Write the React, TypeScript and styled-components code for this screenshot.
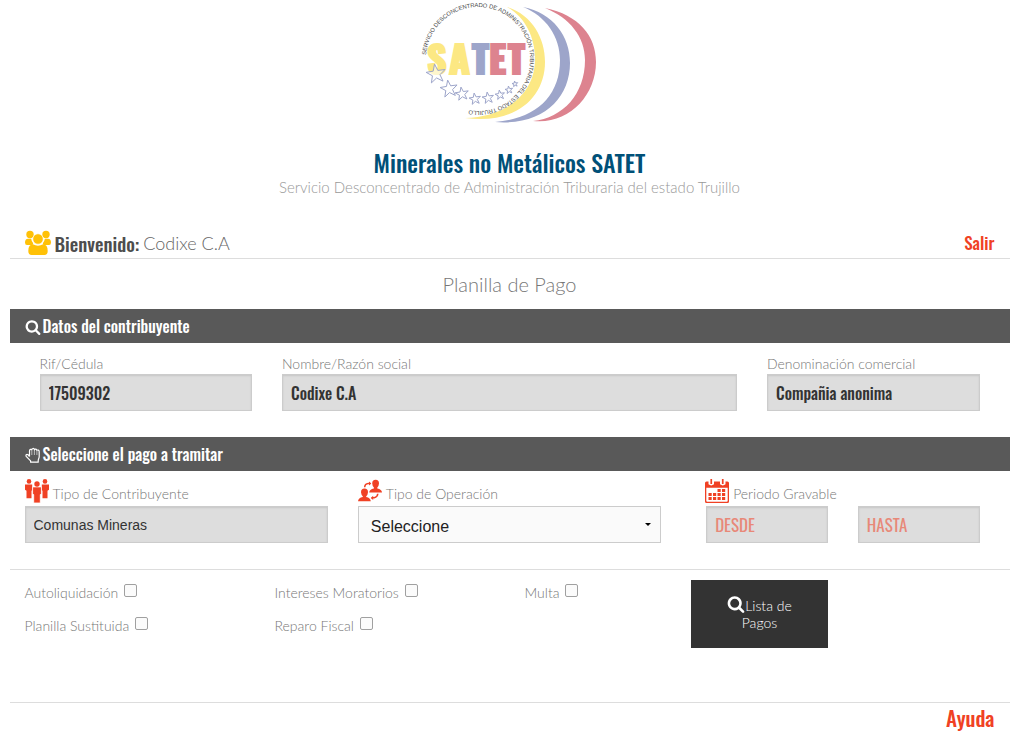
import React from "react";
import styled, { createGlobalStyle } from "styled-components";

const display = '"Oswald", "Liberation Sans Narrow", "Roboto Condensed", "Open Sans Condensed", "Roboto", sans-serif';
const body = '"Lato", sans-serif';
const red = "#f04124";

const GlobalStyle = createGlobalStyle`
  *, *::before, *::after { box-sizing: border-box; }
  body {
    margin: 0;
    background: #fff;
    color: #666;
    font-family: ${body};
    font-size: 14px;
    font-weight: 300;
    line-height: 20px;
  }
`;

const Page = styled.main`
  max-width: 1000px;
  margin: 0 auto;
`;

const Header = styled.header`
  display: flex;
  flex-direction: column;
  align-items: center;
  text-align: center;
`;

const Title = styled.h1`
  margin: 19px 0 0;
  color: #005078;
  font-family: ${display};
  font-size: 24px;
  font-weight: 500;
  line-height: 30px;
`;

const Subtitle = styled.p`
  margin: 0;
  color: #999;
  font-size: 15px;
  line-height: 20px;
`;

const Welcome = styled.div`
  display: flex;
  align-items: center;
  justify-content: space-between;
  height: 32px;
  margin-top: 30px;
  padding: 0 15px;
  border-bottom: 1px solid #ddd;
`;

const Greeting = styled.div`
  display: flex;
  align-items: center;
  gap: 4px;
  font-size: 18px;
`;

const GreetingLabel = styled.strong`
  color: #4d4d4d;
  font-family: ${display};
  font-size: 19px;
  font-weight: 500;
`;

const ActionLink = styled.a<{ $size: number }>`
  color: ${red};
  font-family: ${display};
  font-size: ${(p) => p.$size}px;
  font-weight: 500;
  line-height: 30px;
  text-decoration: none;
`;

const FormTitle = styled.h2`
  margin: 10px 0;
  color: #777;
  font-size: 20px;
  font-weight: 300;
  line-height: 30px;
  text-align: center;
`;

const SectionBar = styled.h3`
  display: flex;
  align-items: center;
  gap: 2px;
  height: 34px;
  margin: 0;
  padding: 0 15px;
  background: #595959;
  color: #fff;
  font-family: ${display};
  font-size: 16px;
  font-weight: 500;

  svg { margin-top: 2px; }
`;

const TaxpayerRow = styled.div`
  display: grid;
  grid-template-columns: 1fr 2fr 1fr;
  padding: 11px 15px 26px;
`;

const PaymentRow = styled.div`
  display: grid;
  grid-template-columns: 1fr 1fr 1fr;
  gap: 30px;
  padding: 7px 15px 26px;
  border-bottom: 1px solid #ddd;
`;

const Field = styled.div`
  min-width: 0;
`;

const TaxpayerField = styled(Field)`
  padding: 0 15px;
`;

const Label = styled.label`
  display: block;
  color: #777;
`;

const IconLabel = styled.label`
  display: flex;
  align-items: flex-end;
  gap: 4px;
  height: 28px;
  padding-bottom: 3px;
  line-height: 18px;
  color: #777;
`;

const TextInput = styled.input<{ $plain?: boolean }>`
  display: block;
  width: 100%;
  height: 37px;
  padding: 8px;
  border: 1px solid #ccc;
  border-radius: 0;
  background: #ddd;
  box-shadow: inset 0 1px 2px rgba(0, 0, 0, 0.1);
  color: #333;
  font-family: ${(p) => (p.$plain ? '"Liberation Sans", sans-serif' : display)};
  font-size: ${(p) => (p.$plain ? 14 : 16)}px;
  font-weight: ${(p) => (p.$plain ? 400 : 500)};

  &::placeholder {
    color: #e88878;
    font-size: 17px;
    font-weight: 400;
    opacity: 1;
  }
`;

const Select = styled.select`
  display: block;
  width: 100%;
  height: 37px;
  padding: 3px 12px 0;
  border: 1px solid #ccc;
  border-radius: 0;
  appearance: none;
  background: #fafafa url("data:image/svg+xml,%3Csvg xmlns='http://www.w3.org/2000/svg' width='6' height='3'%3E%3Cpath d='M0 0h6L3 3z'/%3E%3C/svg%3E") no-repeat right 9px center;
  color: #222;
  font-family: "Liberation Sans", sans-serif;
  font-size: 16px;
`;

const Period = styled.fieldset`
  min-width: 0;
  margin: 0;
  padding: 0;
  border: 0;
`;

const DateRow = styled.div`
  display: grid;
  grid-template-columns: 1fr 1fr;
  gap: 30px;
  padding: 0 15px;
`;

const PeriodLabel = styled(IconLabel)`
  padding-left: 14px;
`;

const OptionsRow = styled.div`
  display: grid;
  grid-template-columns: 3fr 3fr 2fr 2fr 2fr;
  min-height: 133px;
  padding-top: 10px;
  border-bottom: 1px solid #ddd;
`;

const OptionColumn = styled.div`
  display: flex;
  flex-direction: column;
  gap: 11px;
  padding: 2px 15px 0;
`;

const Option = styled.label`
  display: flex;
  align-items: flex-start;
  gap: 6px;
  color: #777;
  white-space: nowrap;
  line-height: 22px;
`;

const Checkbox = styled.input.attrs({ type: "checkbox" })`
  width: 13px;
  height: 13px;
  margin: 2px 0 0;
  border: 1px solid #a0a0a0;
  border-radius: 2px;
  appearance: none;
  background: #fbfbfb;

  &:checked {
    background: #777;
    box-shadow: inset 0 0 0 2px #fff;
  }
`;

const ButtonColumn = styled.div`
  padding: 0 15px;
`;

const ListButton = styled.button`
  width: 100%;
  height: 68px;
  padding: 0 28px 2px;
  border: 0;
  background: #333;
  color: #fff;
  font-family: ${body};
  font-size: 14px;
  font-weight: 300;
  line-height: 17px;

  svg { vertical-align: -2px; }
`;

const Footer = styled.footer`
  display: flex;
  justify-content: flex-end;
  padding: 0 15px;
`;

const SearchIcon = ({ size }: { size: number }) => (
  <svg width={size} height={size} viewBox="0 0 1792 1792" fill="currentColor" aria-hidden="true">
    <path d="M1216 832q0-185-131.5-316.5t-316.5-131.5-316.5 131.5-131.5 316.5 131.5 316.5 316.5 131.5 316.5-131.5 131.5-316.5zm512 832q0 52-38 90t-90 38q-54 0-90-38l-343-342q-179 124-399 124-143 0-273.5-55.5t-225-150-150-225-55.5-273.5 55.5-273.5 150-225 225-150 273.5-55.5 273.5 55.5 225 150 150 225 55.5 273.5q0 220-124 399l343 343q37 37 37 90z" />
  </svg>
);

const HandIcon = () => (
  <svg width="16" height="16" viewBox="0 0 16 16" fill="none" stroke="currentColor" aria-hidden="true">
    <path d="M4.500 9.500V3.900c0-1.600 1.900-2 2.300-.9.200-2 2.300-2 2.700-.2.400-1.200 2.200-1 2.400.6.800-.8 2.300-.3 2.300 1.300v5c0 1.600-1 2.600-1 4v1.500H5.600v-1.300L1.400 9.700C.300 8 1.700 6.600 3 7.700l1.500 1.800" strokeWidth="1.200" strokeLinejoin="round" />
    <path d="M6.800 3.500V8M9.400 3V8M11.900 4V8" strokeWidth=".6" />
  </svg>
);

const UsersIcon = () => (
  <svg width="26" height="26" viewBox="0 0 26 26" fill="#ffc107" aria-hidden="true">
    <circle cx="5" cy="4.500" r="3.700" />
    <circle cx="21" cy="4.500" r="3.700" />
    <path d="M0 12.500q0-3.800 3-3.800h3.200q.3 2.800 2 4.600L7.500 15H2Q0 15 0 12.500zM26 12.500q0-3.800-3-3.800h-3.200q-.3 2.800-2 4.600l.7 1.700H24q2 0 2-2.500z" />
    <circle cx="13" cy="9" r="5.200" stroke="#fff" strokeWidth=".6" />
    <path d="M3.300 21q0-6.700 4.600-6.700Q13 17 18.100 14.300q4.600 0 4.600 6.700 0 4-3.400 4H6.700q-3.400 0-3.400-4z" />
  </svg>
);

const PeopleIcon = () => (
  <svg width="24" height="24" viewBox="0 0 24 24" fill={red} aria-hidden="true">
    <circle cx="4" cy="2.400" r="2.300" />
    <circle cx="20" cy="2.400" r="2.300" />
    <path d="M0 5.500h7.200v5.800l-.7.500v7.500h-5v-7.500L0 10.800zM24 5.500h-7.200v5.800l.7.500v7.500h5v-7.500l1.500-1z" />
    <path d="M7.600 7.900h8.800v7l-1.100.7V24H8.700v-8.400l-1.100-.7z" stroke="#fff" strokeWidth=".8" />
    <circle cx="12" cy="5" r="2.700" />
  </svg>
);

const TransferIcon = () => (
  <svg width="24" height="24" viewBox="0 0 24 24" fill={red} aria-hidden="true">
    <path d="M14.200 4.500a3.400 3.700 0 0 1 6.800 0q-.2 2.700-1.700 4v.9q4.500.8 4.700 4.100H11.200q.2-3.300 4.700-4.100v-.9Q14.400 7.200 14.200 4.500zM3 13.200a3.500 3.700 0 0 1 7 0q-.2 2.700-1.800 4v.9q4.300.8 4.600 4.200H0q.3-3.400 4.800-4.200v-.9Q3.200 15.900 3 13.200z" />
    <path d="M6.700 8.200q.2-3.400 3.500-3.700h2M19.800 14.800q-.3 3.300-3.500 3.900h-2.500" fill="none" stroke={red} strokeWidth="1.500" />
    <path d="m11 2.500 2.300 2L11 6.600zM15.200 16.700l-2.500 2.200 2.500 2z" />
  </svg>
);

const CalendarIcon = () => (
  <svg width="24" height="24" viewBox="0 0 24 24" fill={red} aria-hidden="true">
    <path fillRule="evenodd" d="M1.500 2.500h2v2.800q2.800 2.200 5.500 0V2.500h6v2.800q2.800 2.200 5.500 0V2.500h2Q24 2.500 24 4v18.500q0 1.500-1.500 1.500h-21Q0 24 0 22.500V4q0-1.500 1.500-1.500zM1.300 8.800v13q0 1 1 1h19.400q1 0 1-1v-13z" />
    <path d="M5.400 0h1.700v5H5.400zM16.900 0h1.700v5h-1.700zM12.500 10h3.200v3h-3.200zM17 10h3.200v3H17zM3.500 14h3.200v3H3.500zM8 14h3.200v3H8zM12.500 14h3.200v3h-3.200zM17 14h3.200v3H17zM3.500 18h3.200v3H3.500zM8 18h3.200v3H8zM12.500 18h3.200v3h-3.200zM17 18h3.200v3H17z" />
  </svg>
);

const stars = [
  [26, 74, 10], [39, 89, 9], [52, 94, 7], [65, 99, 6], [78, 98, 6], [90, 95, 5], [99, 90, 4], [105, 84, 3],
];

const starPoints = ([cx, cy, r]: number[]) =>
  Array.from({ length: 10 }, (_, i) => {
    const radius = i % 2 ? r * 0.4 : r;
    const a = (i * Math.PI) / 5 - Math.PI / 2 - 0.15;
    return `${cx + radius * Math.cos(a)},${cy + radius * Math.sin(a)}`;
  }).join(" ");

const Logo = () => (
  <svg width="200" height="128" viewBox="0 0 200 128" role="img" aria-label="SATET">
    <defs>
      <path id="ring" d="M16 59A52 52 0 0 1 120 59A52 52 0 0 1 16 59" />
    </defs>
    <path fill="#fce883" d="M97 7C122 15 135 38 135 62C135 98 105 125 55 118C96 117 125 94 125 59C125 37 115 17 97 7z" />
    <path fill="#9da5ca" d="M113 7C143 13 160 36 160 63C160 98 133 126 85 122C126 119 150 96 150 60C150 37 136 16 113 7z" />
    <path fill="#dd838f" d="M135 8C169 15 186 36 186 62C186 96 158 125 123 121C153 118 175 94 175 60C175 37 160 18 135 8z" />
    <g fontFamily={display} fontSize="38" fontWeight="700" strokeWidth="2">
      <text x="17" y="74" fill="#fce883" stroke="#fce883">S</text>
      <text x="39" y="74" fill="#fce883" stroke="#fce883">A</text>
      <text x="62" y="74" fill="#9da5ca" stroke="#9da5ca">T</text>
      <text x="79" y="74" fill="#dd838f" stroke="#dd838f">E</text>
      <text x="98" y="74" fill="#dd838f" stroke="#dd838f">T</text>
    </g>
    <g fill="#fff" fillOpacity=".6" stroke="#9da5ca" strokeWidth="1">
      {stars.map((s) => <polygon key={s[0]} points={starPoints(s)} />)}
    </g>
    <text fontFamily="Liberation Sans, sans-serif" fontSize="5.800" fontWeight="400" fill="#444">
      <textPath href="#ring" startOffset="4">SERVICIO DESCONCENTRADO DE ADMINISTRACIÓN TRIBUTARIA DEL ESTADO TRUJILLO</textPath>
    </text>
  </svg>
);

const App = () => (
  <>
    <GlobalStyle />
    <Page>
      <Header>
        <Logo />
        <Title>Minerales no Metálicos SATET</Title>
        <Subtitle>Servicio Desconcentrado de Administración Triburaria del estado Trujillo</Subtitle>
      </Header>

      <Welcome>
        <Greeting>
          <UsersIcon />
          <GreetingLabel>Bienvenido:</GreetingLabel>
          <span>Codixe C.A</span>
        </Greeting>
        <ActionLink href="#salir" $size={17}>Salir</ActionLink>
      </Welcome>

      <form>
        <FormTitle>Planilla de Pago</FormTitle>

        <SectionBar><SearchIcon size={16} />Datos del contribuyente</SectionBar>
        <TaxpayerRow>
          <TaxpayerField>
            <Label htmlFor="rif">Rif/Cédula</Label>
            <TextInput id="rif" defaultValue="17509302" readOnly />
          </TaxpayerField>
          <TaxpayerField>
            <Label htmlFor="nombre">Nombre/Razón social</Label>
            <TextInput id="nombre" defaultValue="Codixe C.A" readOnly />
          </TaxpayerField>
          <TaxpayerField>
            <Label htmlFor="denominacion">Denominación comercial</Label>
            <TextInput id="denominacion" defaultValue="Compañia anonima" readOnly />
          </TaxpayerField>
        </TaxpayerRow>

        <SectionBar><HandIcon />Seleccione el pago a tramitar</SectionBar>
        <PaymentRow>
          <Field>
            <IconLabel htmlFor="tipo"><PeopleIcon />Tipo de Contribuyente</IconLabel>
            <TextInput id="tipo" $plain defaultValue="Comunas Mineras" readOnly />
          </Field>
          <Field>
            <IconLabel htmlFor="operacion"><TransferIcon />Tipo de Operación</IconLabel>
            <Select id="operacion"><option>Seleccione</option></Select>
          </Field>
          <Period>
            <PeriodLabel htmlFor="desde"><CalendarIcon />Periodo Gravable</PeriodLabel>
            <DateRow>
              <TextInput id="desde" placeholder="DESDE" readOnly />
              <TextInput aria-label="Hasta" placeholder="HASTA" readOnly />
            </DateRow>
          </Period>
        </PaymentRow>

        <OptionsRow>
          <OptionColumn>
            <Option>Autoliquidación<Checkbox /></Option>
            <Option>Planilla Sustituida<Checkbox /></Option>
          </OptionColumn>
          <OptionColumn>
            <Option>Intereses Moratorios<Checkbox /></Option>
            <Option>Reparo Fiscal<Checkbox /></Option>
          </OptionColumn>
          <OptionColumn>
            <Option>Multa<Checkbox /></Option>
          </OptionColumn>
          <ButtonColumn>
            <ListButton type="button"><SearchIcon size={18} />Lista de Pagos</ListButton>
          </ButtonColumn>
        </OptionsRow>
      </form>

      <Footer><ActionLink href="#ayuda" $size={21}>Ayuda</ActionLink></Footer>
    </Page>
  </>
);

export default App;
